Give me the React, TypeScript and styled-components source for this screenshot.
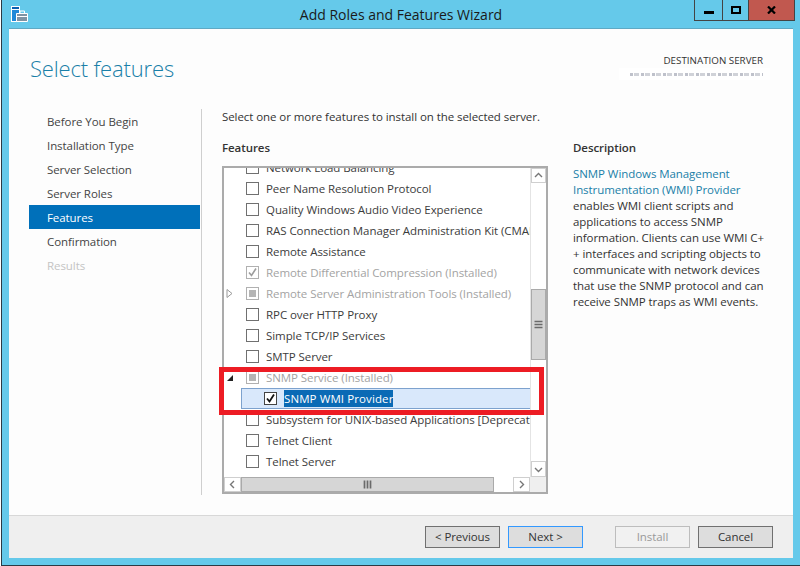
import React from 'react';
import styled, { createGlobalStyle } from 'styled-components';

const Global = createGlobalStyle`
  html, body { margin: 0; padding: 0; background: #fff; }
  * { box-sizing: border-box; }
`;

const Win = styled.div`
  width: 799px; height: 566px; margin-left: 1px; position: relative; overflow: hidden;
  display: flex; flex-direction: column;
  background: #65c9ea;
  border-left: 1px solid #2b3a44;
  border-bottom: 1px solid #2b3a44;
  padding: 0 7px 7px 7px;
  font-family: "Open Sans", "Liberation Sans", sans-serif;
  font-size: 11.5px; letter-spacing: -0.07px; color: #3c3c3c;
`;
const TitleBar = styled.div`
  height: 29px; flex: none; display: flex; align-items: center; justify-content: center;
  position: relative; font-size: 14px; letter-spacing: 0; color: #1a1a1a; border-bottom: 1px solid #5fa9c4;
`;
const AppIcon = styled.svg` position: absolute; left: 2px; top: 6px; `;
const Controls = styled.div`
  position: absolute; right: -2px; top: 0; height: 21px; display: flex;
  border: 1px solid #444; border-top: none;
`;
const Ctl = styled.div<{ $w: number; $close?: boolean }>`
  width: ${p => p.$w}px; display: flex; align-items: center; justify-content: center;
  background: ${p => (p.$close ? '#c1584f' : 'transparent')};
  & + & { border-left: 1px solid #444; }
`;
const Client = styled.div` flex: 1; display: flex; flex-direction: column; background: #fdfdfd; min-height: 0; `;
const Header = styled.div` height: 80px; flex: none; display: flex; justify-content: space-between; padding: 23px 30px 0 21px; `;
const PageTitle = styled.div` font-size: 22px; font-weight: 300; letter-spacing: -0.15px; color: #1a7fa8; line-height: 32px; `;
const Dest = styled.div` display: flex; flex-direction: column; align-items: flex-end; padding-top: 3px; `;
const DestLabel = styled.div` font-size: 9.8px; letter-spacing: 0; line-height: 12px; color: #333; `;
const Redacted = styled.div`
  width: 151px; height: 12px; margin-top: 1px; background: #fff; margin-right: -7px;
  display: flex; justify-content: flex-end; padding: 5px 7px 0 0;
`;
const Smudge = styled.div`
  width: 133px; height: 3px; opacity: 0.55;
  background: repeating-linear-gradient(90deg, #8a8fa0 0 3px, #fff 3px 4px, #a9adb8 4px 9px, #fff 9px 11px);
`;
const Body = styled.div` flex: 1; display: flex; min-height: 0; `;
const Nav = styled.div` width: 192px; flex: none; padding: 0 0 0 20px; margin-bottom: 20px; display: flex; flex-direction: column; `;
const NavItem = styled.div<{ $active?: boolean; $dim?: boolean }>`
  height: 24px; width: 171px; padding-left: 18px; display: flex; align-items: center;
  background: ${p => (p.$active ? '#0070ba' : 'transparent')};
  color: ${p => (p.$active ? '#fff' : p.$dim ? '#c4c4c4' : '#444')};
`;
const Divider = styled.div` width: 1px; background: #cfcfcf; margin-bottom: 20px; `;
const Main = styled.div` flex: 1; display: flex; flex-direction: column; padding: 0 0 0 20px; min-width: 0; `;
const Lead = styled.div` height: 16px; line-height: 16px; color: #333; `;
const Cols = styled.div` display: flex; margin-top: 15px; `;
const Left = styled.div` width: 326px; flex: none; `;
const Heading = styled.div` font-weight: 600; color: #333; line-height: 16px; height: 26px; `;
const Right = styled.div` margin-left: 25px; width: 195px; `;
const Desc = styled.div` line-height: 16px; color: #333; `;
const DescLink = styled.span` color: #1a7fa8; `;

const Box = styled.div`
  position: relative; width: 326px; height: 328px;
  border: 2px solid #ababab; background: #fff;
  display: grid; grid-template-columns: 1fr 16px; grid-template-rows: 1fr 15px;
`;
const Rows = styled.div` overflow: hidden; min-width: 0; `;
const RowsInner = styled.div` margin-top: -11px; `;
const Row = styled.div<{ $dim?: boolean; $sel?: boolean }>`
  height: 21px; display: flex; align-items: center; white-space: nowrap;
  padding-left: 22px;
  color: ${p => (p.$dim ? '#a3a3a3' : '#3c3c3c')};
  ${p => p.$sel ? `margin-left: 17px; padding-left: 22px; background: #d9e8fb; border: 1px solid #7da2ce; border-right: none;` : ''}
`;
const Twist = styled.svg` position: absolute; left: 2px; `;
const CheckBox = styled.div<{ $dim?: boolean; $dark?: boolean }>`
  width: 13px; height: 13px; flex: none; margin-right: 7px; display: flex; align-items: center; justify-content: center;
  background: #fff;
  border: 1px solid ${p => (p.$dim ? '#b0b0b0' : p.$dark ? '#444' : '#707070')};
`;
const Fill = styled.div` width: 7px; height: 7px; background: #b5b5b5; `;
const SelText = styled.span` background: #0a6ab5; color: #fff; line-height: 17px; letter-spacing: 0.1px; `;
const RowWrap = styled.div` position: relative; display: flex; align-items: center; `;
const VBar = styled.div` background: #fff; border-left: 1px solid #e4e4e4; display: flex; flex-direction: column; grid-row: 1; grid-column: 2; `;
const SBtn = styled.div<{ $h: number }>`
  height: ${p => p.$h}px; flex: none; display: flex; align-items: center; justify-content: center;
  background: #fff; border: 1px solid #cfcfcf;
`;
const VTrack = styled.div` flex: 1; padding-top: 106px; padding-bottom: 101px; display: flex; flex-direction: column; background: #fff; `;
const VThumb = styled.div` flex: 1; background: #d6d6d6; border: 1px solid #aaa; display: flex; align-items: center; justify-content: center; `;
const HBar = styled.div` display: flex; grid-row: 2; grid-column: 1; background: #fff; `;
const HBtn = styled.div`
  width: 17px; flex: none; display: flex; align-items: center; justify-content: center; border: 1px solid #cfcfcf; background: #fff;
`;
const HThumb = styled.div` width: 253px; background: #d6d6d6; display: flex; align-items: center; justify-content: center; border: 1px solid #aaa; `;
const HTrack = styled.div` flex: 1; `;
const Corner = styled.div` background: #efefef; grid-row: 2; grid-column: 2; `;
const Highlight = styled.div`
  position: absolute; left: -5px; top: 199px; width: 325px; height: 48px; border: 5px solid #ed1c24; pointer-events: none;
`;
const Footer = styled.div`
  height: 43px; flex: none; background: #efefef; border-top: 1px solid #d8d8d8;
  display: flex; align-items: flex-start; padding: 10px 0 0 416px;
`;
const Btn = styled.div<{ $focus?: boolean; $off?: boolean }>`
  width: 75px; height: 22px; padding-bottom: 1px; display: flex; align-items: center; justify-content: center;
  background: ${p => (p.$off ? '#f1f1f1' : '#dddddd')};
  border: 1px solid ${p => (p.$focus ? '#3399ff' : p.$off ? '#bdbdbd' : '#707070')};
  color: ${p => (p.$off ? '#9a9a9a' : '#333')};
`;
const Gap = styled.div<{ $w: number }>` width: ${p => p.$w}px; flex: none; `;

const Check = ({ c = '#9d9d9d', w = 1.6 }: { c?: string; w?: number }) => (
  <svg width="11" height="11" viewBox="0 0 11 11"><path d="M2 5.5 L4.5 8.5 L9 1.5" fill="none" stroke={c} strokeWidth={w} /></svg>
);
const Grip = ({ v }: { v?: boolean }) => (
  <svg width="9" height="9" viewBox="0 0 9 9">
    {v ? <path d="M0.5 1.5h8M0.5 4.5h8M0.5 7.5h8" stroke="#6a6a6a" strokeWidth="1.7" /> : <path d="M1.5 0.5v8M4.5 0.5v8M7.5 0.5v8" stroke="#6a6a6a" strokeWidth="1.7" />}
  </svg>
);
const Chev = ({ d }: { d: string }) => (
  <svg width="9" height="9" viewBox="0 0 9 9"><path d={d} fill="none" stroke="#777" strokeWidth="1.4" /></svg>
);

const items: { t: string; dim?: boolean; state?: 'check' | 'fill' }[] = [
  { t: 'Network Load Balancing' },
  { t: 'Peer Name Resolution Protocol' },
  { t: 'Quality Windows Audio Video Experience' },
  { t: 'RAS Connection Manager Administration Kit (CMAK)' },
  { t: 'Remote Assistance' },
  { t: 'Remote Differential Compression (Installed)', dim: true, state: 'check' },
  { t: 'Remote Server Administration Tools (Installed)', dim: true, state: 'fill' },
  { t: 'RPC over HTTP Proxy' },
  { t: 'Simple TCP/IP Services' },
  { t: 'SMTP Server' },
  { t: 'SNMP Service (Installed)', dim: true, state: 'fill' },
];

export default function App() {
  return (
    <Win>
      <Global />
      <TitleBar>
        <AppIcon width="17" height="16" viewBox="0 0 17 16">
          <rect x="0.5" y="0.5" width="8" height="15" fill="#1e88d8" stroke="#fff" />
          <rect x="1" y="1" width="7" height="2" fill="#0a5fb0" />
          <rect x="1" y="3" width="7" height="1" fill="#fff" />
          <path d="M5.5 7.5h11v8h-11z" fill="#7f93a3" stroke="#fff" />
          <path d="M9 7V5h4.5v2" fill="none" stroke="#fff" />
          <path d="M5.5 10.5h11" stroke="#fff" />
        </AppIcon>
        Add Roles and Features Wizard
        <Controls>
          <Ctl $w={27}><svg width="10" height="10" viewBox="0 0 10 10"><rect y="6" width="10" height="3" fill="#000" /></svg></Ctl>
          <Ctl $w={26}><svg width="10" height="8" viewBox="0 0 10 8"><rect x="1" y="1" width="8" height="6" fill="none" stroke="#000" strokeWidth="2" /></svg></Ctl>
          <Ctl $w={46} $close><svg width="9" height="8" viewBox="0 0 9 8"><path d="M1 0.5L8 7.5M8 0.5L1 7.5" stroke="#000" strokeWidth="2.2" /></svg></Ctl>
        </Controls>
      </TitleBar>
      <Client>
        <Header>
          <PageTitle>Select features</PageTitle>
          <Dest>
            <DestLabel>DESTINATION SERVER</DestLabel>
            <Redacted><Smudge /></Redacted>
          </Dest>
        </Header>
        <Body>
          <Nav>
            <NavItem>Before You Begin</NavItem>
            <NavItem>Installation Type</NavItem>
            <NavItem>Server Selection</NavItem>
            <NavItem>Server Roles</NavItem>
            <NavItem $active>Features</NavItem>
            <NavItem>Confirmation</NavItem>
            <NavItem $dim>Results</NavItem>
          </Nav>
          <Divider />
          <Main>
            <Lead>Select one or more features to install on the selected server.</Lead>
            <Cols>
              <Left>
                <Heading>Features</Heading>
                <Box>
                  <Rows>
                    <RowsInner>
                      {items.map((it, i) => (
                        <RowWrap key={it.t}>
                          {i === 6 && <Twist width="8" height="9" viewBox="0 0 8 9"><path d="M1 0.5L6 4.5L1 8.5z" fill="#fff" stroke="#999" /></Twist>}
                          {i === 10 && <Twist width="8" height="8" viewBox="0 0 8 8"><path d="M7 1V7H1z" fill="#222" /></Twist>}
                          <Row $dim={it.dim}>
                            <CheckBox $dim={it.dim}>
                              {it.state === 'check' && <Check />}
                              {it.state === 'fill' && <Fill />}
                            </CheckBox>
                            {it.t}
                          </Row>
                        </RowWrap>
                      ))}
                      <Row $sel>
                        <CheckBox $dark><Check c="#111" w={1.8} /></CheckBox>
                        <SelText>SNMP WMI Provider</SelText>
                      </Row>
                      <Row><CheckBox />Subsystem for UNIX-based Applications [Deprecated]</Row>
                      <Row><CheckBox />Telnet Client</Row>
                      <Row><CheckBox />Telnet Server</Row>
                    </RowsInner>
                  </Rows>
                  <VBar>
                    <SBtn $h={15}><Chev d="M1 6L4.5 2.5L8 6" /></SBtn>
                    <VTrack><VThumb><Grip v /></VThumb></VTrack>
                    <SBtn $h={16}><Chev d="M1 3L4.5 6.5L8 3" /></SBtn>
                  </VBar>
                  <HBar>
                    <HBtn><Chev d="M6 1L2.5 4.5L6 8" /></HBtn>
                    <HThumb><Grip /></HThumb>
                    <HTrack />
                    <HBtn><Chev d="M3 1L6.5 4.5L3 8" /></HBtn>
                  </HBar>
                  <Corner />
                  <Highlight />
                </Box>
              </Left>
              <Right>
                <Heading>Description</Heading>
                <Desc>
                  <DescLink>SNMP Windows Management Instrumentation (WMI) Provider</DescLink> enables WMI client scripts and applications to access SNMP information. Clients can use WMI C+
                  <br />+ interfaces and scripting objects to communicate with network devices that use the SNMP protocol and can receive SNMP traps as WMI events.
                </Desc>
              </Right>
            </Cols>
          </Main>
        </Body>
        <Footer>
          <Btn>&lt; Previous</Btn><Gap $w={8} />
          <Btn $focus>Next &gt;</Btn><Gap $w={32} />
          <Btn $off>Install</Btn><Gap $w={8} />
          <Btn>Cancel</Btn>
        </Footer>
      </Client>
    </Win>
  );
}
